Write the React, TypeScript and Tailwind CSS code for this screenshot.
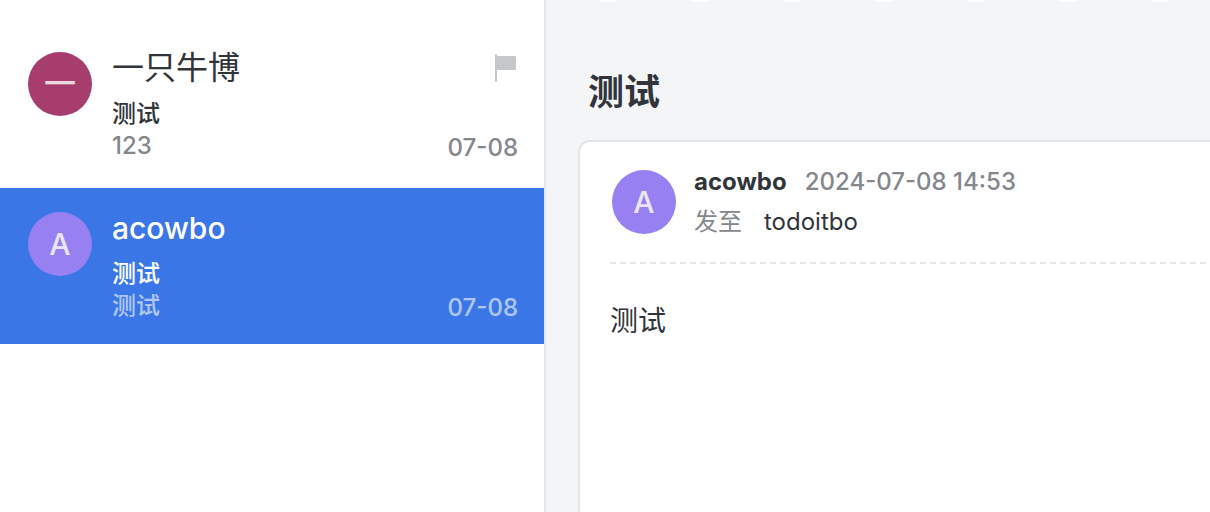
import clsx from "clsx";
import { useState } from "react";

interface Mail {
    id: number;
    sender: string;
    initial: string;
    avatarColor: string;
    subject: string;
    preview: string;
    date: string;
    flagged: boolean;
}

const mails: Mail[] = [
    {
        id: 1,
        sender: "一只牛博",
        initial: "一",
        avatarColor: "bg-[#a63d6c]",
        subject: "测试",
        preview: "123",
        date: "07-08",
        flagged: true,
    },
    {
        id: 2,
        sender: "acowbo",
        initial: "A",
        avatarColor: "bg-[#9680f2]",
        subject: "测试",
        preview: "测试",
        date: "07-08",
        flagged: false,
    },
];

const toolbarActions = ["回复", "回复全部", "转发", "归档", "删除", "移动", "更多"];

// 拉丁字母比汉字显大，缩小一号
const isLatin = (text: string): boolean => /^[\x20-\x7e]+$/.test(text);

const Avatar = ({ initial, color }: { initial: string; color: string }) => (
    <span
        className={clsx(
            "flex size-16 shrink-0 items-center justify-center rounded-full leading-8 font-medium text-white/80",
            isLatin(initial) ? "text-3xl" : "text-[32px]",
            color
        )}
    >
        {initial}
    </span>
);

const FlagIcon = () => (
    <svg viewBox="0 0 24 28" className="h-7 w-6" aria-hidden="true">
        <rect x="1" y="0" width="2" height="28" className="fill-[#c6c7c9]" />
        <path d="M3 2h17.5a1.500 1.500 0 0 1 1.500 1.500v11a1.500 1.500 0 0 1-1.500 1.500H3z" className="fill-[#c6c7c9]" />
    </svg>
);

const MailRow = ({
    mail,
    selected,
    onSelect,
}: {
    mail: Mail;
    selected: boolean;
    onSelect: () => void;
}) => (
    <li>
        <button
            type="button"
            onClick={onSelect}
            className={clsx(
                "flex w-full gap-5 pt-5 pr-[26px] pb-5 pl-7 text-left",
                selected ? "bg-[#3b76e7] text-white" : "bg-white text-[#31353b]"
            )}
        >
            <span className="pt-1">
                <Avatar initial={mail.initial} color={mail.avatarColor} />
            </span>
            <span className="flex min-w-0 flex-1 flex-col">
                <span className="flex items-center justify-between">
                    <span
                        className={clsx(
                            "truncate",
                            isLatin(mail.sender)
                                ? "text-3xl leading-10 font-medium"
                                : "text-[32px] leading-10"
                        )}
                    >
                        {mail.sender}
                    </span>
                    {mail.flagged && <FlagIcon />}
                </span>
                <span className="mt-[10px] truncate text-2xl leading-8 font-medium">{mail.subject}</span>
                <span
                    className={clsx(
                        "flex justify-between text-2xl leading-8 font-medium",
                        selected ? "text-white/60" : "text-[#84878c]"
                    )}
                >
                    <span className="truncate">{mail.preview}</span>
                    <span className="pt-0.5">{mail.date}</span>
                </span>
            </span>
        </button>
    </li>
);

export default function App() {
    const [selectedId, setSelectedId] = useState(2);

    return (
        <div className="flex min-h-screen bg-[#f4f5f7] font-[Inter,'Noto_Sans_CJK_SC',sans-serif] text-[#31353b]">
            <aside className="w-[546px] shrink-0 border-r-2 border-[#e4e5e7] bg-white pt-7">
                <ul className="flex flex-col gap-1">
                    {mails.map((mail) => (
                        <MailRow
                            key={mail.id}
                            mail={mail}
                            selected={mail.id === selectedId}
                            onSelect={() => setSelectedId(mail.id)}
                        />
                    ))}
                </ul>
            </aside>

            <main className="flex min-w-0 flex-1 flex-col pl-[30px]">
                {/* 工具栏已滚出视口，只露出按钮底边 */}
                <div className="flex h-0.5 items-end gap-7 overflow-hidden">
                    {toolbarActions.map((action) => (
                        <button
                            key={action}
                            type="button"
                            aria-label={action}
                            className="size-16 shrink-0 rounded-full bg-white"
                        />
                    ))}
                </div>

                <h1 className="mt-[66px] pl-3 text-4xl leading-12 font-bold">测试</h1>

                <article className="mt-6 ml-0.5 flex-1 rounded-tl-xl border-t-2 border-l-2 border-[#e4e5e7] bg-white pt-5 pl-[30px]">
                    <header className="flex gap-[18px] pl-0.5">
                        <span className="pt-2">
                            <Avatar initial="A" color="bg-[#9680f2]" />
                        </span>
                        <div className="flex flex-col text-2xl leading-10">
                            <div className="flex gap-[18px]">
                                <span className="font-bold">acowbo</span>
                                <time dateTime="2024-07-08T14:53" className="font-medium text-[#84878c]">
                                    2024-07-08 14:53
                                </time>
                            </div>
                            <div className="flex gap-[22px]">
                                <span className="text-[#84878c]">发至</span>
                                <span>todoitbo</span>
                            </div>
                        </div>
                    </header>
                    <div className="mt-5 h-0.5 bg-[repeating-linear-gradient(to_right,#e6e6e6_0_6px,transparent_6px_10px)]" />
                    <p className="mt-9 text-[28px] leading-[42px]">测试</p>
                </article>
            </main>
        </div>
    );
}
